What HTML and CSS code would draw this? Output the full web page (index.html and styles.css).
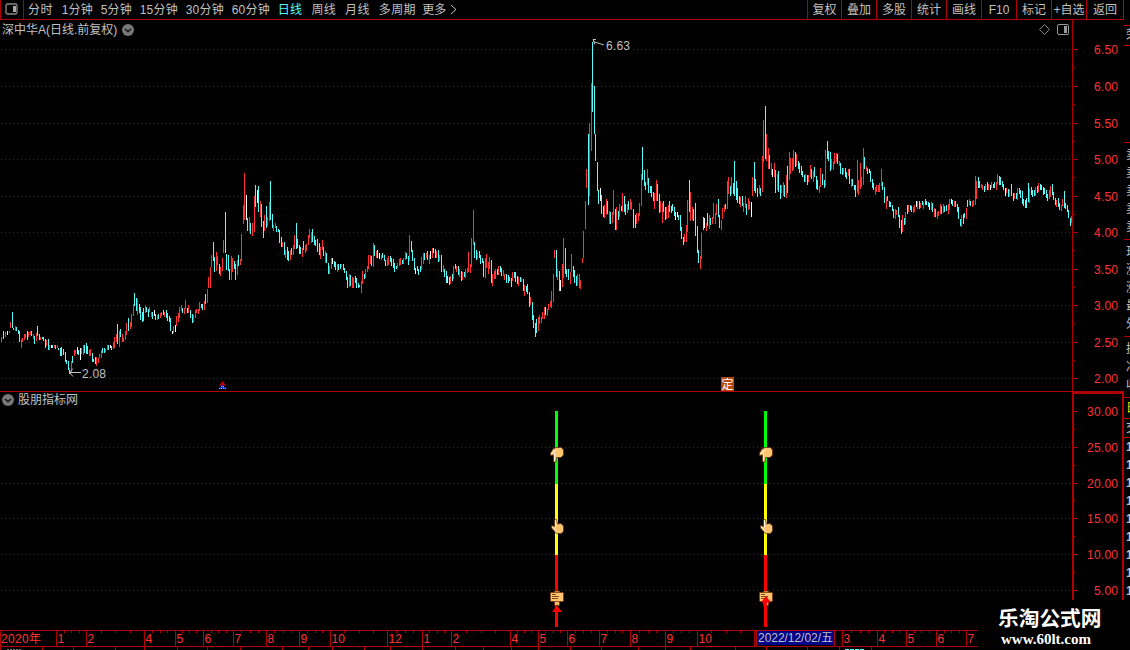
FILE: index.html
```html
<!DOCTYPE html>
<html lang="zh-CN">
<head>
  <meta charset="UTF-8">
  <meta name="viewport" content="width=device-width, initial-scale=1.0">
  <title>深中华A 日线</title>
  <link rel="stylesheet" href="styles.css">
</head>
<body>
  <div class="app">
    <div class="main">
      <div class="toolbar">
        <div class="layout-btn">
          <svg width="13" height="13" viewBox="0 0 13 13"><rect x="1" y="1" width="11" height="10" rx="1.5" fill="none" stroke="#888" stroke-width="1.3"/><rect x="8" y="3" width="3" height="6" fill="#aaa"/></svg>
        </div>
        <div class="periods">
          <span class="w2">分时</span>
          <span class="w3">1分钟</span>
          <span class="w3">5分钟</span>
          <span class="w4">15分钟</span>
          <span class="w4">30分钟</span>
          <span class="w4">60分钟</span>
          <span class="w2 active">日线</span>
          <span class="w2">周线</span>
          <span class="w2">月线</span>
          <span class="w5">多周期</span>
          <span class="more">更多</span>
          <svg width="8" height="11" viewBox="0 0 8 11"><path d="M1 1L6 5.5L1 10" fill="none" stroke="#c0c0c0"/></svg>
        </div>
        <div class="tools">
          <span>复权</span>
          <span>叠加</span>
          <span>多股</span>
          <span>统计</span>
          <span>画线</span>
          <span>F10</span>
          <span>标记</span>
          <span>+自选</span>
          <span class="last">返回</span>
        </div>
      </div>

      <div class="panel price">
        <div class="title">深中华A(日线.前复权)
          <svg width="12" height="12" viewBox="0 0 12 12"><circle cx="6" cy="6" r="6" fill="#777"/><path d="M3 5L6 7.6L9 5" fill="none" stroke="#111" stroke-width="1.4"/></svg>
        </div>
        <svg id="price" width="1124" height="372" viewBox="0 20 1124 372">
          <g class="grid"></g>
          <g class="scale"></g>
          <path id="up" class="up"/>
          <path id="down" class="down"/>
          <path id="flat" class="flat"/>
          <!-- high / low marks -->
          <path class="mark" d="M81 372.5H69M73 368.5L69.500 372.5L73 376.500M69.500 370V374"/>
          <text class="note" x="82" y="378" textLength="24">2.08</text>
          <path class="mark" d="M604 45L593 41.500M596 39.500H593L595 44.500"/>
          <text class="note" x="606" y="50" textLength="24">6.63</text>
          <!-- event marks -->
          <path d="M219 385.500L222.500 381L226 385.500Z" fill="#c00000"/>
          <path d="M219 389L222.500 385L226 389Z" fill="#2030ff"/>
          <path d="M219 388.500H226M221 386.500H224" stroke="#54dcfc" stroke-dasharray="1 1"/>
          <rect x="721" y="377" width="13" height="14" fill="#b84810"/>
          <text class="event" x="721.500" y="388.500">定</text>
          <!-- panel tools -->
          <path d="M1044.500 24.500L1049.500 29.500L1044.500 34.500L1039.500 29.500Z" fill="none" stroke="#888"/>
          <rect x="1057.500" y="24.500" width="11" height="10" rx="1.500" fill="none" stroke="#999"/>
          <rect x="1064" y="26" width="3" height="7" fill="#999"/>
          <path class="frame" d="M1072.500 20V391M0 391.500H1124"/>
        </svg>
      </div>

      <div class="panel signal">
        <div class="title">
          <svg width="12" height="12" viewBox="0 0 12 12"><circle cx="6" cy="6" r="6" fill="#777"/><path d="M3 5L6 7.6L9 5" fill="none" stroke="#111" stroke-width="1.4"/></svg>
          股朋指标网
        </div>
        <svg id="signal" width="1124" height="238" viewBox="0 392 1124 238">
          <defs>
            <g id="bar">
              <rect x="555" y="411" width="3" height="73" fill="#00ff00"/>
              <rect x="555" y="484" width="3" height="71" fill="#ffff00"/>
              <rect x="555" y="555" width="3" height="72" fill="#ff0000"/>
              <path d="M550.500 453L553 449L556 447.500H561.500L563.500 450V455L561 457.500H556.500L556 462H553.500V455L550.500 455.500Z" fill="#ffc470" stroke="#5a2d10" stroke-width="0.7"/>
              <path d="M551.500 454L554.500 450.500H557M554.500 452V461" fill="none" stroke="#ffeed8"/>
              <path d="M554.500 519.500H556.500L557.500 524L561 523.500L563.500 526V531L561.500 533.500H556.500L551.500 528V525.500L554.500 526.500Z" fill="#ffc470" stroke="#5a2d10" stroke-width="0.7"/>
              <path d="M555.500 520V527.500M552.500 526.500L556.500 531.500" fill="none" stroke="#ffeed8"/>
              <rect x="554.500" y="591" width="5" height="14.500" fill="#f4b868" stroke="#6b3010" stroke-width="0.8"/>
              <rect x="550.500" y="592.500" width="13" height="9" rx="0.800" fill="#ffc470" stroke="#7a3a10" stroke-width="0.8"/>
              <path d="M552 594.500H556M552 596.500H559M552 598.500H558" stroke="#8a4a20"/>
            </g>
          </defs>
          <g class="grid"></g>
          <g class="scale"></g>
          <use href="#bar"/>
          <use href="#bar" x="209"/>
          <path d="M557 605.500L562 612H552ZM555 611H558V627H555Z" fill="#ff0000"/>
          <path d="M766 596L771 602.500H761ZM764 602H767V627H764Z" fill="#ff0000"/>
          <path class="frame2" d="M1073 600V393H1123V600"/>
        </svg>
      </div>

      <svg id="dates" width="1124" height="20" viewBox="0 630 1124 20"></svg>
    </div>

    <div class="side">
      <div class="s-head">荣</div>
      <div class="s-blank"></div>
      <div class="s-rows"><p>卖</p><p>卖</p><p>卖</p><p>卖</p><p>卖</p></div>
      <div class="s-rows"><p>现</p><p>涨</p><p>涨</p><p>最</p><p>外</p></div>
      <div class="s-info"><p>换</p><p>净</p><p>收</p></div>
      <div class="s-tab">日</div>
      <div class="s-sub">交</div>
      <div class="s-list"><p>1</p><p>1</p><p>1</p><p>1</p><p>1</p><p>1</p><p>1</p><p>1</p><p>1</p></div>
    </div>

    <div class="brand">
      <div class="name">乐淘公式网</div>
      <div class="url">www.60lt.com</div>
    </div>
  </div>
  <script src="chart.js"></script>
</body>
</html>
```
FILE: styles.css
```css
* {
  box-sizing: border-box;
}
body {
  margin: 0;
  background: #000;
  color: #c0c0c0;
  font-family: "Liberation Sans", "Noto Sans CJK SC", sans-serif;
  font-size: 12px;
}
p {
  margin: 0;
}
svg {
  display: block;
  flex-shrink: 0;
}
.app {
  position: relative;
  display: flex;
  width: 1130px;
  height: 650px;
  overflow: hidden;
}
.main {
  width: 1124px;
  flex-shrink: 0;
}

/* toolbar */
.toolbar {
  display: flex;
  height: 20px;
  line-height: 20px;
  border-left: 1px solid #b00000;
  border-right: 1px solid #b00000;
  border-bottom: 1px solid #b00000;
  white-space: nowrap;
}
.layout-btn {
  width: 23px;
  padding: 3px 0 0 4px;
  border-right: 1px solid #b00000;
}
.periods {
  display: flex;
  align-items: center;
  padding-left: 4px;
  flex: 1;
}
.w2 { width: 33.7px; letter-spacing: 0.4px; }
.w3 { width: 39px; letter-spacing: 0.2px; }
.w4 { width: 46px; letter-spacing: 0.2px; }
.w5 { width: 43.5px; letter-spacing: 0.4px; }
.more { width: 28px; }
.active {
  color: #54fcfc;
}
.tools {
  display: flex;
}
.tools span {
  width: 35px;
  height: 19px;
  text-align: center;
  border-left: 1px solid #b00000;
}
.tools span:first-child {
  width: 34px;
}
.tools .last {
  width: 37px;
}

/* panels */
.panel {
  position: relative;
}
.price {
  height: 372px;
}
.signal {
  height: 238px;
}
.title {
  position: absolute;
  left: 2px;
  display: flex;
  align-items: center;
  gap: 4px;
  line-height: 18px;
}
.price .title {
  top: 1px;
  gap: 5px;
}
.signal .title {
  top: -1px;
}
.grid path {
  stroke: #a00000;
  stroke-dasharray: 1 3;
}
.scale path, .frame, #dates path {
  stroke: #b00000;
  fill: none;
}
.frame2 {
  stroke: #b00000;
  stroke-width: 2;
  fill: none;
}
.scale text, #dates text {
  fill: #ff3232;
}
.scale text {
  text-anchor: end;
}
.note {
  fill: #c0c0c0;
}
.mark {
  stroke: #c0c0c0;
  fill: none;
}
.event {
  fill: #fff;
  font-size: 12px;
}
.up { fill: #ff3232; }
.down { fill: #54fcfc; }
.flat { fill: #fff; }
#dates .picked {
  fill: #c0c0c0;
}

/* right column, only its edge is visible */
.side {
  width: 6px;
  height: 600px;
  overflow: hidden;
  padding-top: 25px;
  white-space: nowrap;
}
.side div {
  border-top: 1px solid #b00000;
  padding-left: 2px;
}
.s-head { height: 20px; line-height: 18px; }
.s-blank { height: 97px; }
.s-rows { height: 97px; padding-top: 3px; }
.s-rows p, .s-info p, .s-list p { height: 18px; line-height: 18px; }
.s-info { height: 61px; padding-top: 3px; }
.s-tab { height: 21px; line-height: 20px; color: #e0e000; }
.s-sub { height: 19px; line-height: 18px; }
.s-list { font-weight: bold; }

.brand {
  position: absolute;
  left: 978px;
  top: 600px;
  width: 152px;
  height: 50px;
  background: #000;
  color: #fff;
  font-weight: bold;
}
.name {
  padding: 7px 0 0 20px;
  font-size: 20.7px;
  line-height: 24px;
}
.url {
  padding-left: 23px;
  font-family: "Liberation Serif", serif;
  font-size: 15px;
  line-height: 16px;
}
```
FILE: chart.js
```js
// colour, x, high, low  (r = up, c = down, w = flat)
const bars = `
r 1 337 342,c 3 331 339,r 5 332 337,w 7 331 335,r 9 331 333,r 10 322 328,c 12 312 328,c 13 328 330,r 15 326 331,c 16 327 331,c 18 330 334,c 19 331 342,
r 21 339 348,r 22 338 342,r 24 334 340,r 25 334 338,c 27 331 340,r 28 332 337,r 30 331 335,c 31 331 336,r 33 334 339,c 34 336 344,r 36 333 341,c 37 326 336,
c 39 334 340,r 40 337 340,c 42 337 339,c 43 337 341,c 45 339 348,r 46 340 346,c 48 339 350,r 49 345 350,w 51 345 348,c 52 345 348,r 54 345 348,c 55 345 349,
r 57 345 348,c 58 348 350,c 60 348 356,c 61 347 356,c 63 349 355,c 65 352 362,c 66 360 364,c 68 361 370,r 69 368 373,r 71 361 373,c 72 356 363,r 74 350 356,
r 75 350 354,w 77 347 354,c 78 350 355,w 80 348 360,r 81 348 354,r 83 345 355,c 84 345 353,c 86 343 354,c 87 346 354,r 89 350 356,r 90 349 356,c 92 353 362,
c 93 359 362,c 95 357 364,r 96 357 366,r 98 358 363,r 99 354 358,r 101 350 358,c 102 348 353,c 104 348 353,r 105 349 352,r 107 345 350,c 108 345 350,
w 110 345 348,c 111 346 350,r 113 342 349,r 114 337 348,r 116 334 342,c 117 324 344,r 119 331 347,c 120 329 337,r 122 334 342,r 123 338 342,r 125 331 340,
r 126 323 335,c 128 318 331,r 130 322 329,r 131 314 327,r 133 304 316,c 134 293 306,c 136 298 311,r 137 299 315,c 139 304 313,c 140 307 320,c 142 312 322,
c 143 308 321,r 145 305 313,c 146 307 312,c 148 309 317,r 149 307 312,r 151 312 317,c 152 312 319,w 154 310 316,c 155 314 320,r 157 315 320,c 158 314 319,
r 160 313 318,r 161 312 316,c 163 310 315,r 164 312 317,c 166 310 318,c 167 313 321,c 169 316 322,c 170 318 331,w 172 331 334,r 173 326 333,w 175 325 332,
r 176 316 326,r 178 313 322,r 179 307 318,r 181 305 311,c 182 308 313,r 184 308 314,r 185 300 309,c 187 308 313,r 188 305 313,c 190 310 318,c 192 314 323,
r 193 315 322,r 195 310 318,r 196 309 313,r 198 309 314,r 199 302 311,c 201 304 308,c 202 304 310,r 204 301 310,c 205 294 304,r 207 289 303,r 208 277 288,
r 210 267 288,r 211 255 267,c 213 242 261,c 214 257 272,r 216 252 271,r 217 256 265,c 219 264 274,r 220 267 276,r 222 258 271,r 223 240 253,c 225 212 253,
c 226 254 270,c 228 255 271,c 229 269 280,r 231 256 280,r 232 258 272,c 234 261 269,c 235 264 280,r 237 260 275,c 238 255 266,r 240 259 265,r 241 234 261,
r 243 205 224,r 244 173 220,w 246 195 220,c 247 218 231,r 249 217 231,c 250 223 234,r 252 223 236,r 254 196 232,c 255 185 207,w 257 190 203,c 258 186 212,
r 260 201 217,c 261 204 227,c 263 221 238,r 264 215 231,c 266 206 228,r 267 217 226,r 269 202 221,c 270 181 220,c 272 214 228,r 273 225 231,r 275 223 228,
c 276 226 232,c 278 229 232,c 279 230 243,c 281 237 247,r 282 242 247,c 284 242 255,r 285 250 258,c 287 247 260,c 288 251 261,r 290 250 260,c 291 248 255,
r 293 245 255,r 294 235 249,c 296 223 249,c 297 239 248,c 299 245 254,c 300 247 254,r 302 248 257,c 303 241 250,r 305 245 253,r 306 244 251,r 308 235 245,
r 309 229 238,r 311 232 243,c 312 229 242,c 314 236 245,c 315 240 246,c 317 239 252,c 319 243 255,r 320 247 259,r 322 240 250,c 323 247 256,r 325 251 263,
c 326 253 263,c 328 263 274,r 329 266 274,r 331 258 269,w 332 258 264,c 334 261 267,c 335 262 270,r 337 264 272,c 338 264 270,c 340 264 269,r 341 264 267,
c 343 264 270,c 344 268 273,c 346 271 280,c 347 277 288,r 349 274 287,c 350 275 286,r 352 277 288,r 353 278 288,c 355 276 283,c 356 278 288,c 358 283 288,
c 359 285 287,r 361 281 293,r 362 271 284,c 364 274 279,r 365 269 278,r 367 266 272,r 368 255 269,r 370 255 264,c 371 256 266,r 373 243 267,c 374 245 256,
r 376 251 258,w 377 250 258,w 379 253 259,r 381 255 260,c 382 253 258,c 384 255 261,c 385 260 266,r 387 258 266,r 388 256 265,c 390 256 262,c 391 258 266,
c 393 259 268,c 394 263 272,c 396 266 269,r 397 263 268,r 399 259 266,r 400 258 265,c 402 260 264,r 403 258 264,r 405 252 260,c 406 253 259,c 408 256 265,
r 409 235 261,c 411 241 252,c 412 250 261,c 414 258 270,w 415 268 274,c 417 266 271,c 418 269 275,c 420 266 272,r 421 257 270,r 423 253 264,c 424 253 260,
r 426 253 258,c 427 251 260,r 429 255 264,w 430 251 259,r 432 248 258,w 433 248 253,c 435 249 258,r 436 251 258,c 438 250 262,r 439 255 261,c 441 255 272,
r 443 265 272,c 444 269 277,c 446 271 283,w 447 276 283,c 449 277 285,r 450 276 284,c 452 274 281,r 453 266 279,c 455 264 269,r 456 266 272,c 458 266 275,
r 459 269 277,c 461 271 281,r 462 272 280,c 464 272 277,r 465 269 278,r 467 268 273,r 468 252 272,r 470 264 273,r 471 238 267,r 473 210 245,c 474 242 258,
c 476 250 260,r 477 252 259,c 479 251 258,c 480 255 264,c 482 258 263,c 483 261 277,r 485 258 278,r 486 254 268,r 488 262 274,r 489 257 269,c 491 260 283,
r 492 274 286,r 494 271 279,r 495 269 279,c 497 269 275,r 498 266 275,c 500 266 272,c 501 268 276,r 503 270 276,r 504 274 280,c 506 274 283,c 508 275 283,
c 509 277 281,c 511 278 287,r 512 272 281,c 514 272 278,c 515 272 282,c 517 276 284,r 518 277 286,c 520 277 282,r 521 278 282,c 523 279 291,r 524 285 296,
c 526 286 292,c 527 284 294,c 529 292 307,r 530 297 305,c 532 302 320,c 533 315 328,c 535 323 337,c 536 319 333,r 538 317 331,r 539 315 324,r 541 317 323,
r 542 312 319,r 544 307 319,w 545 307 315,r 547 309 316,r 548 304 310,r 550 301 307,r 551 291 308,r 553 274 302,r 554 250 258,c 556 250 277,r 557 269 280,
c 559 271 291,w 560 280 291,r 562 264 287,r 563 238 278,c 565 248 274,c 566 269 277,c 568 269 280,r 570 272 284,r 571 254 272,c 573 266 277,c 574 270 283,
c 576 276 286,r 577 274 285,r 579 274 288,r 580 280 289,r 582 258 263,r 583 231 258,r 585 201 229,r 586 169 188,c 588 134 205,r 589 123 196,r 591 83 151,
c 592 42 112,c 594 86 134,c 595 134 161,c 597 162 191,c 598 190 204,w 600 188 201,c 601 195 214,c 603 206 217,r 604 205 218,r 606 199 215,c 607 201 214,
r 609 211 224,c 610 212 224,r 612 212 223,r 613 190 215,c 615 209 230,r 616 207 230,c 618 211 220,r 619 204 217,c 621 206 211,r 622 193 212,c 624 196 212,
c 625 204 215,r 627 204 213,c 628 201 210,r 630 199 209,r 631 202 210,c 633 209 228,c 635 215 228,r 636 213 224,r 638 213 221,r 639 203 216,r 641 174 206,
c 642 147 180,c 644 170 186,c 645 182 190,r 647 169 185,c 648 178 193,c 650 186 193,c 651 186 197,c 653 192 201,r 654 193 209,r 656 180 201,c 657 184 201,
c 659 194 213,r 660 201 212,r 662 203 223,c 663 201 212,c 665 207 220,r 666 207 219,r 668 205 218,c 669 201 212,c 671 206 213,c 672 204 211,c 674 207 216,
w 675 212 220,w 677 212 217,c 678 215 220,c 680 215 231,c 681 227 239,c 683 237 245,r 684 234 242,r 686 225 242,r 687 200 232,c 689 180 212,r 690 192 221,
r 692 207 220,c 693 209 221,c 695 203 236,c 697 226 253,c 698 250 263,r 700 256 269,r 701 233 259,c 703 217 230,w 704 218 228,r 706 223 231,c 707 213 226,
r 709 215 229,c 710 218 225,r 712 217 224,r 713 203 219,r 715 213 224,r 716 204 215,c 718 199 217,c 719 215 228,r 721 220 230,r 722 208 219,r 724 205 212,
c 725 204 209,r 727 181 209,r 728 177 194,c 730 186 196,r 731 177 194,c 733 183 194,c 734 161 196,c 736 181 200,c 737 188 203,c 739 196 204,r 740 197 207,
c 742 196 206,r 743 203 212,r 745 196 208,c 746 204 215,r 748 198 210,r 749 201 209,w 751 202 217,r 752 177 196,c 754 162 191,c 755 179 193,c 757 188 197,
r 759 185 194,c 760 188 196,r 762 156 192,r 763 120 162,c 765 106 159,r 766 134 161,r 768 148 169,c 769 155 169,r 771 163 175,w 772 169 177,r 774 163 177,
c 775 170 193,r 777 174 190,c 778 171 192,c 780 185 199,r 781 185 193,r 783 182 196,c 784 185 197,r 786 175 198,c 787 166 193,r 789 152 180,r 790 158 174,
r 792 158 171,r 793 150 170,c 795 152 167,r 796 154 166,c 798 161 169,c 799 163 173,c 801 166 175,c 802 171 177,c 804 175 182,r 805 174 182,c 807 175 185,
r 808 175 182,r 810 165 177,c 811 169 179,r 813 171 182,c 814 167 177,c 816 176 189,c 817 180 190,r 819 186 193,r 820 168 187,c 822 174 185,c 824 180 188,
r 825 150 186,c 827 141 159,c 828 151 161,c 830 152 171,r 831 159 169,r 833 161 170,r 834 153 164,r 836 153 162,c 837 154 164,r 839 161 166,c 840 163 174,
c 842 168 175,r 843 168 174,c 845 168 177,c 846 172 179,r 848 169 176,c 849 169 184,r 851 179 187,c 852 179 186,c 854 185 190,c 855 185 197,r 857 160 193,
r 858 180 195,r 860 163 189,r 861 177 187,r 863 148 185,c 864 157 169,r 866 166 171,c 867 168 174,w 869 169 173,c 870 171 182,c 872 179 188,c 873 183 190,
r 875 187 195,r 876 185 192,r 878 185 192,r 879 183 192,r 881 169 186,c 882 182 190,c 884 187 203,r 886 197 209,c 887 196 201,c 889 201 207,c 890 202 207,
c 892 205 211,c 893 209 218,r 895 209 219,r 896 210 215,c 898 207 217,c 899 215 228,c 901 220 234,r 902 215 232,c 904 218 225,r 905 212 224,c 907 205 214,
r 908 205 212,c 910 205 210,c 911 206 212,r 913 207 213,r 914 205 212,w 916 201 207,r 917 201 209,c 919 201 209,r 920 203 208,c 922 201 205,r 923 202 209,
c 925 199 205,c 926 201 205,c 928 202 207,w 929 203 210,r 931 202 210,c 932 203 212,r 934 208 217,c 935 209 217,r 937 212 219,r 938 211 216,r 940 204 214,
c 941 206 214,r 943 204 213,c 944 206 212,c 946 205 211,r 948 204 214,r 949 199 210,w 951 199 204,c 952 200 206,r 954 201 207,c 955 201 207,c 957 204 212,
c 958 207 219,c 960 219 226,r 961 215 227,c 963 214 224,c 964 213 218,r 966 208 219,c 967 200 207,r 969 199 205,c 970 201 206,r 972 201 207,r 973 200 206,
r 975 176 205,r 976 181 199,c 978 177 188,c 979 181 188,r 981 184 188,r 982 185 190,c 984 186 192,r 985 184 190,c 987 182 190,r 988 184 190,w 990 185 190,
r 991 182 188,c 993 184 188,c 994 182 188,r 996 182 190,r 997 174 184,c 999 176 185,c 1000 177 185,c 1002 181 187,c 1003 184 190,w 1005 188 196,
r 1006 188 193,c 1008 189 197,r 1009 190 197,c 1011 184 196,c 1013 193 201,r 1014 193 199,c 1016 193 199,r 1017 188 200,c 1019 188 194,c 1020 190 198,
c 1022 191 204,c 1023 199 206,c 1025 200 208,c 1026 198 208,c 1028 183 202,r 1029 188 203,c 1031 187 195,c 1032 190 197,c 1034 190 196,r 1035 187 196,
c 1037 186 193,r 1038 183 192,c 1040 184 190,c 1041 185 190,c 1043 187 195,c 1044 188 194,c 1046 190 198,c 1047 194 201,r 1049 190 199,r 1050 186 197,
c 1052 184 195,c 1053 192 200,c 1055 198 205,r 1056 200 207,c 1058 198 207,c 1059 203 210,r 1061 205 211,r 1062 199 206,c 1064 191 208,c 1065 203 209,
c 1067 205 212,c 1068 210 218,c 1070 218 226,r 1071 216 223`;

const paths = { r: "", c: "", w: "" };
bars.trim().split(",").forEach(item => {
  const [color, x, high, low] = item.trim().split(" ");
  paths[color] += `M${x} ${high}h1V${low}h-1Z`;
});
document.getElementById("up").setAttribute("d", paths.r);
document.getElementById("down").setAttribute("d", paths.c);
document.getElementById("flat").setAttribute("d", paths.w);

function drawScale(id, levels, skipFirstGrid) {
  const panel = document.getElementById(id);
  let grid = "";
  let scale = "";
  levels.forEach(([label, y], i) => {
    if (!(skipFirstGrid && i === 0)) {
      grid += `<path d="M1 ${y + 0.5}H1070"/>`;
    }
    scale += `<path d="M1073 ${y + 0.5}H1078"/>`;
    if (i < levels.length - 1) {
      const mid = Math.floor((y + levels[i + 1][1]) / 2);
      scale += `<path d="M1073 ${mid + 0.5}H1075"/>`;
    }
    scale += `<text x="1118" y="${y + 5}" textLength="${label.length * 7 - 4}">${label}</text>`;
  });
  panel.querySelector(".grid").innerHTML = grid;
  panel.querySelector(".scale").innerHTML = scale;
}

drawScale("price", [["6.50", 49], ["6.00", 86], ["5.50", 123], ["5.00", 159], ["4.50", 196],
  ["4.00", 232], ["3.50", 269], ["3.00", 305], ["2.50", 342], ["2.00", 378]], false);
drawScale("signal", [["30.00", 411], ["25.00", 447], ["20.00", 483], ["15.00", 518], ["10.00", 554], ["5.00", 590]], true);

// date axis
const months = [[56, "1"], [86, "2"], [144, "4"], [175, "5"], [203, "6"], [233, "7"], [266, "8"], [299, "9"], [330, "10"],
  [387, "12"], [422, "1"], [451, "2"], [510, "4"], [538, "5"], [567, "6"], [599, "7"], [630, "8"], [665, "9"], [697, "10"],
  [754, ""], [842, "3"], [877, "4"], [906, "5"], [936, "6"], [966, "7"]];
const lower = [0, 42, 73, 115, 144, 177, 207, 240, 282, 308, 332, 364, 390, 422, 455, 483, 511, 538, 570, 601, 638, 665, 690, 735, 766, 807, 839, 871];

let d = "M0 630.5H978M0 646.5H978M0.500 630V646M756.500 630V646M834.500 630V646";
let labels = `<text x="1" y="643" textLength="40">2020年</text>`;
months.forEach(([x, label], i) => {
  d += `M${x + 0.5} 630V646`;
  labels += `<text x="${x + 1.5}" y="643">${label}</text>`;
  if (label && i < months.length - 1) {
    const step = (months[i + 1][0] - x) / 4;
    for (let k = 1; k < 4; k++) {
      d += `M${Math.round(x + step * k) + 0.5} 631V633`;
    }
  }
});
lower.forEach(x => {
  d += `M${x + 0.5} 647V650`;
});
document.getElementById("dates").innerHTML = `<path d="${d}"/>
  <rect x="757" y="631" width="77" height="14" fill="#000088"/>${labels}
  <text class="picked" x="758" y="642" textLength="75">2022/12/02/五</text>
  <path d="M7 649.5H22" style="stroke: #777; stroke-dasharray: 2 1"/>
  <path d="M845 649.5H865" style="stroke: #54fcfc; stroke-dasharray: 4 1"/>`;
```
